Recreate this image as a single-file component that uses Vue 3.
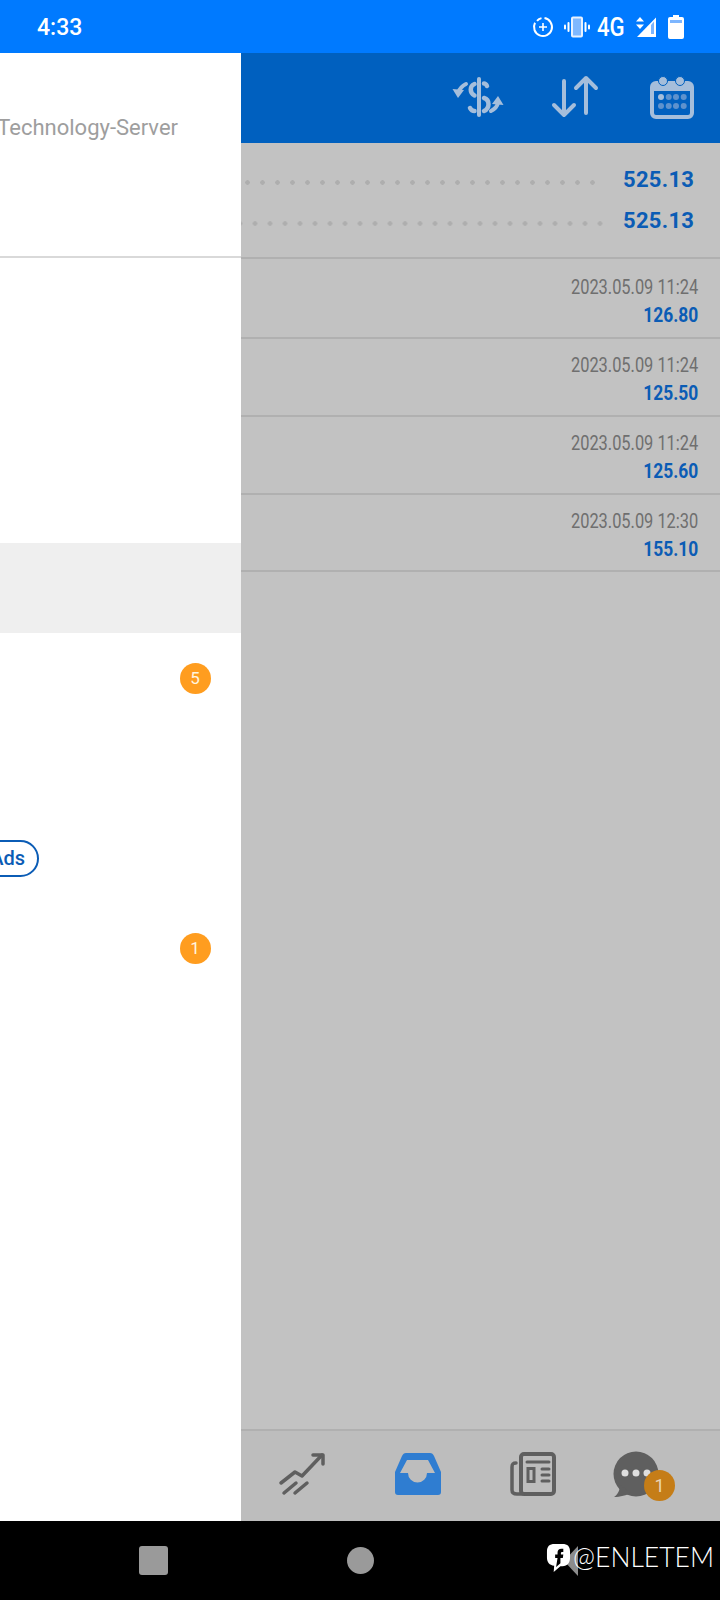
<script setup>
const menu = [
  { id: 1 }, { id: 2 }, { id: 3 }, { id: 4, active: true },
  { id: 5, badge: '5' }, { id: 6 }, { id: 7, pill: 'Ads' }, { id: 8, badge: '1' }
]
const history = [
  { time: '2023.05.09 11:24', value: '126.80' },
  { time: '2023.05.09 11:24', value: '125.50' },
  { time: '2023.05.09 11:24', value: '125.60' },
  { time: '2023.05.09 12:30', value: '155.10' }
]
</script>

<template>
  <div class="screen">
    <div class="status">
      <span class="clock">4:33</span>
      <div class="status-icons">
        <svg class="s-saver" width="22" height="22" viewBox="0 0 22 22" fill="none" stroke="#fff" stroke-width="2">
          <path d="M12.5 2.100A9 9 0 1 1 3 6.800" />
          <path d="M9.500 2.100A9 9 0 0 0 5 4.800" />
          <path d="M11 7v8M7 11h8" stroke-width="1.600" />
        </svg>
        <svg class="s-vib" width="26" height="22" viewBox="0 0 26 22">
          <rect x="8" y="1.500" width="10" height="19" rx="1" fill="#7fb8ff" stroke="#e8f2ff" stroke-width="2" />
          <rect x="3.500" y="6" width="2" height="10" rx="1" fill="#fff" />
          <rect x="20.500" y="6" width="2" height="10" rx="1" fill="#fff" />
          <rect x="0" y="8.500" width="2" height="5" rx="1" fill="#fff" />
          <rect x="24" y="8.500" width="2" height="5" rx="1" fill="#fff" />
        </svg>
        <span class="net">4G</span>
        <svg class="s-sig" width="22" height="22" viewBox="0 0 22 22">
          <path d="M21 1.500V21H2Z" fill="#fff" />
          <path d="M16 9V18H19V5.500Z" fill="#7db6ff" />
          <path d="M5 1l4 4.500H1ZM5 13l4-4.500H1Z" fill="#fff" />
        </svg>
        <svg class="s-bat" width="16" height="24" viewBox="0 0 16 24">
          <path d="M5 0h6v2h3a2 2 0 0 1 2 2v18a2 2 0 0 1-2 2H2a2 2 0 0 1-2-2V4a2 2 0 0 1 2-2h3Z" fill="#fff" />
          <rect x="2" y="5" width="12" height="3" fill="#7db6ff" />
        </svg>
      </div>
    </div>

    <div class="middle">
      <aside class="drawer">
        <div class="account"><span class="server">Technology-Server</span></div>
        <div class="menu">
          <div v-for="item in menu" :key="item.id" class="menu-row" :class="{ active: item.active, 'has-pill': item.pill }">
            <span v-if="item.badge" class="badge">{{ item.badge }}</span>
            <span v-if="item.pill" class="pill">{{ item.pill }}</span>
          </div>
        </div>
      </aside>

      <main class="main">
        <header class="topbar">
          <div class="top-cell">
            <svg width="52" height="44" viewBox="0 0 52 44" fill="none" stroke="#a5bedb" stroke-width="4.500" stroke-linecap="round">
              <path d="M27 4V40" stroke-width="4" />
              <path d="M35 11C34 9 33 8.500 32 8.500M22.500 9C17.500 11 17.500 18 22.500 20.500M32 23C38 25 38 33 32 36M22.500 36C20.500 36 19 35 18 33" />
              <path d="M14 9C10 11 8 13 6.500 17" stroke-width="4" />
              <path d="M0.500 14L12 15L6 23Z" fill="#a5bedb" stroke="none" />
              <path d="M39 36C43 34 45 32 46 28" stroke-width="4" />
              <path d="M51.500 30L40 29L46 21Z" fill="#a5bedb" stroke="none" />
            </svg>
          </div>
          <div class="top-cell">
            <svg width="50" height="44" viewBox="0 0 50 44" fill="none" stroke="#a5bedb" stroke-width="4" stroke-linecap="round" stroke-linejoin="round">
              <path d="M14 6V40M4 30L14 40L24 30" />
              <path d="M36 38V3M26 13L36 3L46 13" />
            </svg>
          </div>
          <div class="top-cell">
            <svg width="44" height="44" viewBox="0 0 44 44" fill="none">
              <rect x="2" y="8" width="40" height="34" rx="4" stroke="#a5bedb" stroke-width="4" />
              <rect x="2" y="8" width="40" height="8" fill="#a5bedb" />
              <circle cx="13" cy="6" r="4.500" fill="#a5bedb" stroke="#0060bf" stroke-width="1" />
              <circle cx="30" cy="6" r="4.500" fill="#a5bedb" stroke="#0060bf" stroke-width="1" />
              <circle cx="11" cy="22" r="3" fill="#a5bedb" />
              <circle cx="18.700" cy="22" r="3" fill="#5e92cd" />
              <circle cx="26" cy="22" r="3" fill="#5e92cd" />
              <circle cx="33.700" cy="22" r="3" fill="#5e92cd" />
              <circle cx="11" cy="31" r="3" fill="#5e92cd" />
              <circle cx="18.700" cy="31" r="3" fill="#5e92cd" />
              <circle cx="26" cy="31" r="3" fill="#5e92cd" />
              <circle cx="33.700" cy="31" r="3" fill="#5e92cd" />
            </svg>
          </div>
        </header>

        <section class="summary">
          <div class="sum-row">
            <span class="leader"></span>
            <span class="sum-value">525.13</span>
          </div>
          <div class="sum-row wide">
            <span class="leader"></span>
            <span class="sum-value">525.13</span>
          </div>
        </section>

        <section class="list">
          <div v-for="(row, i) in history" :key="i" class="row">
            <span class="row-time">{{ row.time }}</span>
            <span class="row-value">{{ row.value }}</span>
          </div>
        </section>

        <nav class="tabs">
          <svg width="48" height="48" viewBox="0 0 48 48" fill="none" stroke="#5f5f5f" stroke-width="3.500" stroke-linecap="round" stroke-linejoin="round">
            <path d="M3 34L17 23L24 27L44 6" />
            <path d="M35 6H45V15" />
            <path d="M6 44L18 34M17 44L29 34" />
          </svg>
          <svg width="48" height="48" viewBox="0 0 48 48">
            <path fill="#2f7dd1" fill-rule="evenodd" d="M12 4H36C38 4 39 5 40 7L47 23V43C47 45 46 46 44 46H4C2 46 1 45 1 43V23L8 7C9 5 10 4 12 4ZM13 11L6 24H14A9.500 9.500 0 0 0 33 24H41L34 11Z" />
          </svg>
          <svg width="48" height="48" viewBox="0 0 48 48" fill="none" stroke="#5f5f5f" stroke-linecap="round">
            <rect x="12" y="5" width="33" height="40" rx="3" stroke-width="4" />
            <path d="M7 14C4 14 3 15 3 18V41C3 44 5 45 8 45H14" stroke-width="3.500" />
            <path d="M18 13H40M33 20H40M33 26H40M33 32H40" stroke-width="3" />
            <rect x="19" y="19.500" width="6" height="13" stroke-width="3" />
          </svg>
          <div class="chat">
            <svg width="48" height="48" viewBox="0 0 48 48">
              <circle cx="24" cy="25" r="22.500" fill="#5f5f5f" />
              <path d="M8 36C8 42 5 46 2 48C8 48 15 46 19 44Z" fill="#5f5f5f" />
              <circle cx="13" cy="24" r="3.500" fill="#dedede" />
              <circle cx="24" cy="24" r="3.500" fill="#dedede" />
              <circle cx="35" cy="24" r="3.500" fill="#dedede" />
            </svg>
            <span class="chat-badge">1</span>
          </div>
        </nav>
      </main>
    </div>

    <div class="navbar">
      <span class="nav-square"></span>
      <span class="nav-circle"></span>
      <div class="watermark">
        <svg class="back" width="16" height="32" viewBox="0 0 16 32">
          <path d="M14 1V31L0 16Z" fill="#8c8c8c" />
        </svg>
        <svg class="fb" width="25" height="29" viewBox="0 0 26 30">
          <path d="M9 1H17C22.500 1 25 3.500 25 9V15C25 20.500 22.500 24 17 24H15L8 30L8.500 23.500C3.500 23 1 20 1 15V9C1 3.500 3.500 1 9 1Z" fill="#fff" />
          <path d="M18 6H16C13.500 6 12 7.500 12 10V12H9.500V15.500H12L10.500 25L15 21V15.500H17.500L18 12H15.500V10.500C15.500 9.700 16 9.300 17 9.300H18Z" fill="#000" />
        </svg>
        <span class="handle">@ENLETEM</span>
      </div>
    </div>
  </div>
</template>

<style scoped>
.screen {
  position: relative;
  width: 720px;
  height: 1600px;
  display: flex;
  flex-direction: column;
  overflow: hidden;
  font-family: Roboto, "Liberation Sans", sans-serif;
}
.status {
  height: 53px;
  flex: none;
  background: #007aff;
  display: flex;
  align-items: center;
  justify-content: space-between;
  padding: 0 36px 0 37px;
  color: #fff;
}
.clock {
  font-size: 23px;
  font-weight: 500;
  padding-top: 1px;
}
.status-icons {
  display: flex;
  align-items: center;
}
.s-vib { margin-left: 10px; }
.net {
  display: inline-block;
  width: 28px;
  margin-left: 7px;
  font-size: 26px;
  font-weight: 500;
  line-height: 30px;
  white-space: nowrap;
  transform: scaleX(0.85);
  transform-origin: left center;
}
.s-sig { margin-left: 10px; }
.s-bat { margin-left: 11px; }

.middle {
  flex: 1;
  min-height: 0;
  display: flex;
}
.drawer {
  width: 241px;
  flex: none;
  background: #fff;
  overflow: hidden;
}
.account {
  height: 205px;
  box-sizing: border-box;
  border-bottom: 2px solid #d9d9d9;
  padding: 61px 63px 0 0;
  display: flex;
  justify-content: flex-end;
}
.server {
  font-size: 22px;
  line-height: 28px;
  color: #9e9e9e;
  white-space: nowrap;
}
.menu {
  padding-top: 15px;
}
.menu-row {
  height: 90px;
  display: flex;
  align-items: center;
  justify-content: flex-end;
  padding-right: 30px;
}
.menu-row.active { background: #efefef; }
.menu-row.has-pill { padding-right: 202px; }
.badge {
  width: 31px;
  height: 31px;
  border-radius: 50%;
  background: #ff9d1f;
  color: #fff5e0;
  font-size: 17px;
  line-height: 31px;
  text-align: center;
  text-indent: -1px;
}
.pill {
  flex: none;
  height: 37px;
  box-sizing: border-box;
  border: 2px solid #0b5cb5;
  border-radius: 19px;
  padding: 0 12px 0 24px;
  color: #0b5cb5;
  font-size: 20px;
  font-weight: 500;
  line-height: 33px;
}

.main {
  flex: 1;
  min-width: 0;
  display: flex;
  flex-direction: column;
  background: #c2c2c2;
}
.topbar {
  height: 90px;
  flex: none;
  background: #0060bf;
  display: flex;
  justify-content: flex-end;
  box-sizing: border-box;
  padding-bottom: 2px;
}
.top-cell {
  width: 97px;
  display: flex;
  align-items: center;
  justify-content: center;
}
.summary {
  height: 116px;
  flex: none;
  box-sizing: border-box;
  padding-top: 16px;
  border-bottom: 2px solid #b0b0b0;
}
.sum-row {
  height: 41px;
  display: flex;
  align-items: center;
  padding-right: 27px;
}
.leader {
  flex: 1;
  height: 5px;
  margin-top: 5px;
  margin-right: 23px;
  background-image: radial-gradient(circle, #aeaeae 2px, transparent 2.5px);
  background-size: 15px 5px;
  background-position: right center;
}
.sum-row.wide .leader { margin-right: 15.5px; }
.sum-value {
  width: 70px;
  font-size: 22px;
  font-weight: 700;
  letter-spacing: 0.3px;
  color: #0b5cb5;
  white-space: nowrap;
}
.list {
  flex: 1;
  padding-top: 2.2px;
}
.row {
  height: 77.8px;
  box-sizing: border-box;
  border-bottom: 2px solid #b0b0b0;
  padding: 13px 22px 0 0;
  display: flex;
  flex-direction: column;
  align-items: flex-end;
}
.row-time {
  font-size: 20px;
  line-height: 26px;
  color: #6f6f6f;
  white-space: nowrap;
  transform: scaleX(0.82);
  transform-origin: right center;
}
.row-value {
  margin-top: 2px;
  font-size: 20px;
  font-weight: 700;
  line-height: 26px;
  color: #0b5cb5;
  transform: scaleX(0.87);
  transform-origin: right center;
}
.tabs {
  height: 92px;
  flex: none;
  box-sizing: border-box;
  background: #bdbdbd;
  border-top: 2px solid #b0b0b0;
  padding: 0 0 6px 37px;
  display: grid;
  grid-template-columns: 116px 115px 103px 48px;
  align-items: center;
}
.chat {
  position: relative;
  width: 48px;
  height: 48px;
}
.chat-badge {
  position: absolute;
  left: 32px;
  top: 21px;
  width: 31px;
  height: 31px;
  border-radius: 50%;
  background: #c57d17;
  color: #e8d5b5;
  font-size: 18px;
  line-height: 31px;
  text-align: center;
}

.navbar {
  height: 79px;
  flex: none;
  background: #000;
  display: flex;
  align-items: center;
  padding-left: 139px;
}
.nav-square {
  width: 29px;
  height: 29px;
  border-radius: 3px;
  background: #9a9a9a;
}
.nav-circle {
  width: 27px;
  height: 27px;
  margin-left: 179px;
  border-radius: 50%;
  background: #9a9a9a;
}
.watermark {
  position: absolute;
  right: 6px;
  bottom: 28px;
  display: flex;
  align-items: center;
  color: #fff;
}
.back {
  position: absolute;
  left: 18px;
  top: 4px;
}
.fb {
  position: relative;
  margin-top: 2px;
}
.handle {
  position: relative;
  margin-left: 2px;
  font-family: Lato, Roboto, sans-serif;
  font-weight: 300;
  font-size: 26.5px;
  line-height: 30px;
  white-space: nowrap;
}
</style>
